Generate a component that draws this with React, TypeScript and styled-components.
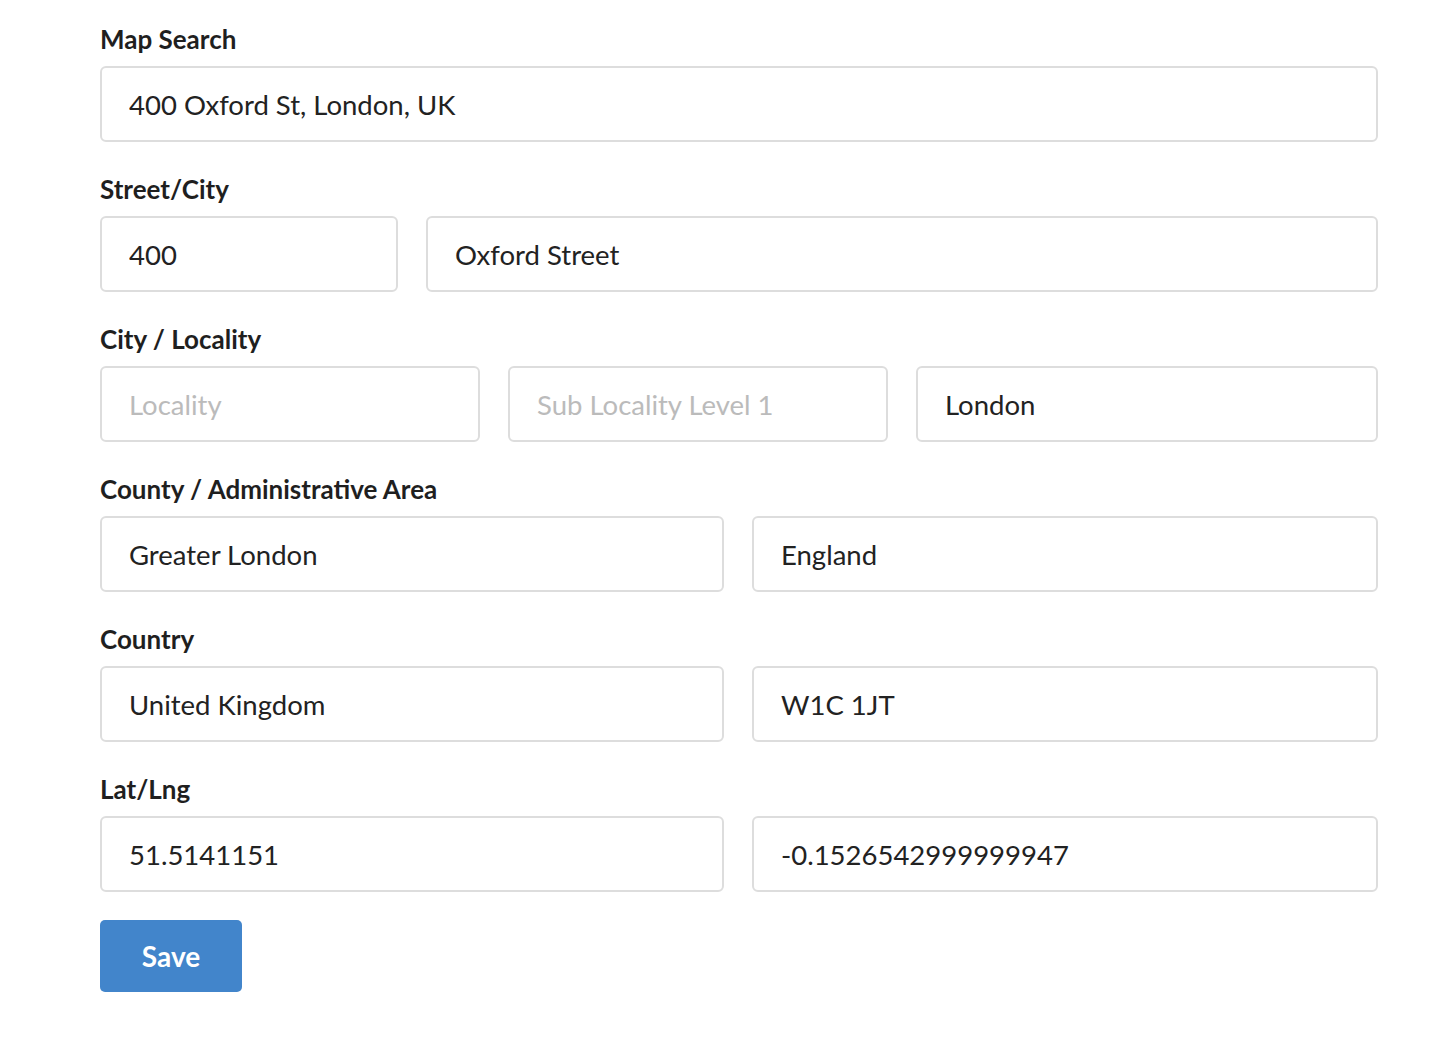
import styled, { createGlobalStyle } from "styled-components";

const GlobalStyle = createGlobalStyle`
  body {
    margin: 0;
    background: #fff;
    font-family: Lato, "Open Sans", sans-serif;
    color: #222;
  }
  * { box-sizing: border-box; }
`;

const Form = styled.form`
  width: 1278px;
  margin-left: 100px;
  padding-top: 20px;
  display: flex;
  flex-direction: column;
  gap: 28px;
`;

const Section = styled.div`
  display: flex;
  flex-direction: column;
`;

const Label = styled.label`
  font-weight: 700;
  font-size: 26px;
  line-height: 38px;
  color: #1f1f1f;
  margin-bottom: 8px;
`;

const Row = styled.div<{ $cols: string }>`
  display: grid;
  grid-template-columns: ${(p) => p.$cols};
  column-gap: 28px;
`;

const Input = styled.input`
  height: 76px;
  width: 100%;
  border: 2px solid #dddddd;
  border-radius: 6px;
  padding: 1px 27px 0;
  font-family: Lato, "Open Sans", sans-serif;
  font-size: 27.5px;
  color: #222;
  background: #fff;
  outline: none;
  &::placeholder {
    color: #bbbbbb;
  }
`;

const SaveButton = styled.button`
  width: 142px;
  height: 72px;
  border: none;
  border-radius: 5px;
  background: #4285cb;
  color: #fff;
  font-family: Lato, "Open Sans", sans-serif;
  font-weight: 700;
  font-size: 28px;
  cursor: pointer;
`;

const App = () => {
  return (
    <>
      <GlobalStyle />
      <Form onSubmit={(e) => e.preventDefault()}>
        <Section>
          <Label>Map Search</Label>
          <Row $cols="1fr">
            <Input defaultValue="400 Oxford St, London, UK" />
          </Row>
        </Section>
        <Section>
          <Label>Street/City</Label>
          <Row $cols="298fr 952fr">
            <Input defaultValue="400" />
            <Input defaultValue="Oxford Street" />
          </Row>
        </Section>
        <Section>
          <Label>City / Locality</Label>
          <Row $cols="380fr 380fr 462fr">
            <Input placeholder="Locality" />
            <Input placeholder="Sub Locality Level 1" />
            <Input defaultValue="London" />
          </Row>
        </Section>
        <Section>
          <Label>County / Administrative Area</Label>
          <Row $cols="624fr 626fr">
            <Input defaultValue="Greater London" />
            <Input defaultValue="England" />
          </Row>
        </Section>
        <Section>
          <Label>Country</Label>
          <Row $cols="624fr 626fr">
            <Input defaultValue="United Kingdom" />
            <Input defaultValue="W1C 1JT" />
          </Row>
        </Section>
        <Section>
          <Label>Lat/Lng</Label>
          <Row $cols="624fr 626fr">
            <Input defaultValue="51.5141151" />
            <Input defaultValue="-0.1526542999999947" />
          </Row>
        </Section>
        <div>
          <SaveButton type="submit">Save</SaveButton>
        </div>
      </Form>
    </>
  );
};

export default App;
